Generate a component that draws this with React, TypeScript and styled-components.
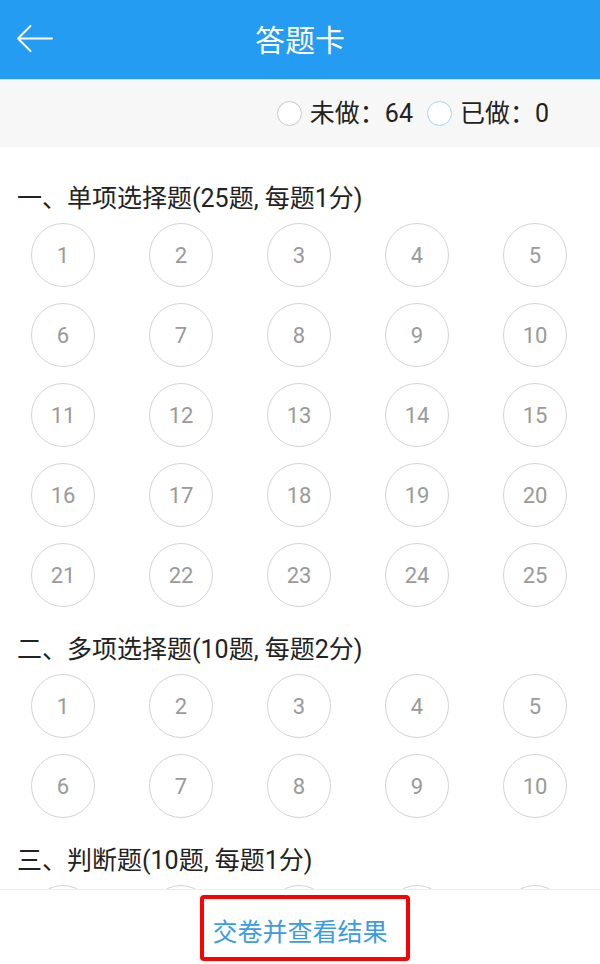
import React from "react";
import styled, { createGlobalStyle } from "styled-components";

const GlobalStyle = createGlobalStyle`
  html, body {
    margin: 0;
    padding: 0;
    background: #ffffff;
    font-family: Roboto, "Noto Sans CJK SC", "Noto Sans", sans-serif;
  }
  * {
    box-sizing: border-box;
  }
`;

const sections = [
  { title: "一、单项选择题(25题, 每题1分)", count: 25 },
  { title: "二、多项选择题(10题, 每题2分)", count: 10 },
  { title: "三、判断题(10题, 每题1分)", count: 10 },
];

const App = () => {
  return (
    <Page>
      <GlobalStyle />
      <Header>
        <BackButton>
          <svg width="37" height="30" viewBox="0 0 37 30" fill="none">
            <path
              d="M36 14.5H2M2 14.5L14.5 2M2 14.5L14.5 27"
              stroke="#ffffff"
              strokeWidth="2"
              strokeLinecap="round"
              strokeLinejoin="round"
            />
          </svg>
        </BackButton>
        <Title>答题卡</Title>
      </Header>

      <StatusBar>
        <Legend>
          <Dot />
          <LegendText>未做：64</LegendText>
        </Legend>
        <Legend>
          <Dot done />
          <LegendText>已做：0</LegendText>
        </Legend>
      </StatusBar>

      <Content>
        {sections.map((s) => (
          <Section key={s.title}>
            <SectionTitle>{s.title}</SectionTitle>
            <Grid>
              {Array.from({ length: s.count }, (_, i) => (
                <Bubble key={i}>{i + 1}</Bubble>
              ))}
            </Grid>
          </Section>
        ))}
      </Content>

      <Footer>
        <SubmitButton>交卷并查看结果</SubmitButton>
      </Footer>
    </Page>
  );
};

export default App;

const Page = styled.div`
  height: 100vh;
  display: flex;
  flex-direction: column;
  overflow: hidden;
`;

const Header = styled.header`
  height: 80px;
  flex-shrink: 0;
  background-color: #239cf1;
  border-bottom: 1px solid #bfe1fa;
  display: flex;
  align-items: center;
  justify-content: center;
  padding-top: 3px;
  position: relative;
`;

const BackButton = styled.div`
  position: absolute;
  left: 16px;
  top: 24px;
  width: 37px;
  height: 30px;
  display: flex;
`;

const Title = styled.h1`
  margin: 0;
  color: #ffffff;
  font-size: 30px;
  font-weight: 400;
  line-height: 1;
`;

const StatusBar = styled.div`
  height: 67px;
  flex-shrink: 0;
  background-color: #f7f7f7;
  display: flex;
  align-items: center;
  justify-content: flex-end;
  padding-right: 51px;
  gap: 14px;
`;

const Legend = styled.div`
  display: flex;
  align-items: center;
  gap: 8px;
`;

const Dot = styled.span<{ done?: boolean }>`
  width: 25px;
  height: 25px;
  border-radius: 50%;
  background: #ffffff;
  border: 1px solid ${(p) => (p.done ? "#a7d4f2" : "#c9c9c9")};
`;

const LegendText = styled.span`
  font-size: 25px;
  color: #222222;
  line-height: 1;
`;

const Content = styled.main`
  flex: 1;
  overflow: hidden;
  padding-top: 37px;
  display: flex;
  flex-direction: column;
  gap: 28px;
`;

const Section = styled.section`
  display: flex;
  flex-direction: column;
  gap: 9px;
`;

const SectionTitle = styled.h2`
  margin: 0;
  padding-left: 17px;
  font-size: 25px;
  font-weight: 400;
  line-height: 30px;
  color: #222222;
`;

const Grid = styled.div`
  display: grid;
  grid-template-columns: repeat(5, 64px);
  column-gap: 54px;
  row-gap: 16px;
  padding-left: 31px;
`;

const Bubble = styled.div`
  width: 64px;
  height: 64px;
  border-radius: 50%;
  border: 1px solid #d4d4d4;
  display: flex;
  align-items: center;
  justify-content: center;
  font-size: 22px;
  color: #9a9a9a;
`;

const Footer = styled.footer`
  height: 75px;
  flex-shrink: 0;
  background: #ffffff;
  border-top: 1px solid #ececec;
  display: flex;
  align-items: center;
  justify-content: center;
  padding-left: 10px;
  padding-top: 1px;
`;

const SubmitButton = styled.div`
  width: 210px;
  height: 66px;
  border: 4px solid #ff0000;
  border-radius: 4px;
  display: flex;
  align-items: center;
  justify-content: center;
  font-size: 25px;
  color: #3a9ce2;
  padding-top: 4px;
  padding-right: 10px;
`;
